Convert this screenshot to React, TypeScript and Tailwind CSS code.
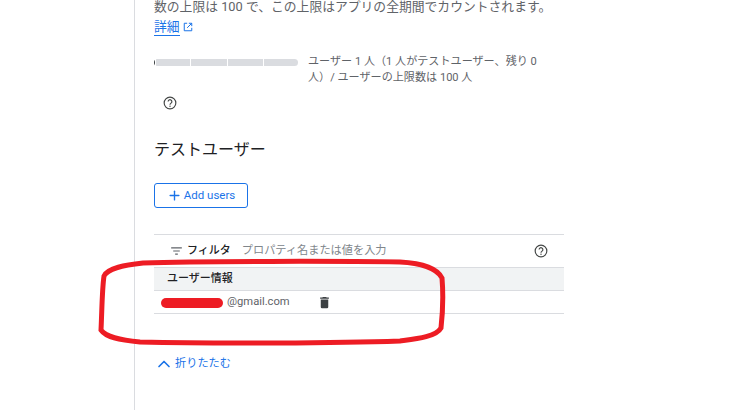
import { Plus, ChevronUp } from "lucide-react";

const font = { fontFamily: '"Roboto", "Noto Sans CJK JP", sans-serif' };

function Help({ className }: { className: string }) {
  return (
    <svg viewBox="0 0 24 24" width="14" height="14" className={className} fill="none">
      <circle cx="12" cy="12" r="10" stroke="#444746" strokeWidth="2" />
      <path d="M8.8 9.6a3.2 3.2 0 1 1 5 2.6c-1.1.8-1.8 1.3-1.8 2.6" stroke="#444746" strokeWidth="2" />
      <circle cx="12" cy="17.5" r="1.2" fill="#444746" />
    </svg>
  );
}

export default function App() {
  return (
    <div className="relative h-[413px] w-[749px] overflow-hidden bg-white" style={font}>
      <div className="ml-[134px] h-[413px] w-[431px] border-l border-[#dadce0] pl-[19px]">
        <p className="mt-[-3px] whitespace-nowrap text-[12.8px] leading-[20px] text-[#5f6368]">
          数の上限は 100 で、この上限はアプリの全期間でカウントされます。
        </p>
        <div className="mt-[1px] flex items-center gap-[3px] text-[12.8px] leading-[20px] text-[#1a73e8]">
          <span className="border-b border-[#1a73e8] leading-[17px]">詳細</span>
          <svg viewBox="0 0 24 24" width="10" height="10" fill="none" stroke="#1a73e8" strokeWidth="2.4">
            <path d="M10 3H3v18h18v-7M14 3h7v7M21 3 10 14" />
          </svg>
        </div>

        <div className="mt-[17px] flex">
          <div className="mt-[6px] flex h-[7px] w-[144px] gap-[1px] overflow-hidden rounded-full">
            <div className="w-[1px] bg-[#3c4043]" />
            <div className="w-[34px] bg-[#dadce0]" />
            <div className="w-[36px] bg-[#dadce0]" />
            <div className="w-[35px] bg-[#dadce0]" />
            <div className="flex-1 bg-[#dadce0]" />
          </div>
          <p className="ml-[10px] mt-[1px] w-[245px] text-[11.1px] leading-[16px] text-[#5f6368]">
            ユーザー 1 人（1 人がテストユーザー、残り 0 人）/ ユーザーの上限数は 100 人
          </p>
        </div>
        <Help className="mt-[10px] ml-[9px]" />

        <h2 className="mt-[28px] text-[16px] leading-[24px] text-[#202124]">テストユーザー</h2>

        <button className="mt-[21px] flex h-[25px] w-[94px] items-center justify-center gap-[2px] rounded-[3px] border border-[#1a73e8] text-[11.5px] font-normal text-[#1a73e8]">
          <Plus size={15} strokeWidth={2.2} />
          Add users
        </button>

        <div className="mt-[26px] w-[410px]">
          <div className="flex h-[33px] items-center border-t border-[#dadce0] pl-[17px] pr-[16px]">
            <svg viewBox="0 0 12 9" width="11" height="8" fill="none" stroke="#5f6368" strokeWidth="1.2">
              <path d="M0 1h12M2.3 4.5h7.4M4.5 8h3" />
            </svg>
            <span className="ml-[5px] text-[11px] font-medium text-[#202124]">フィルタ</span>
            <span className="ml-[11px] text-[11.2px] text-[#80868b]">プロパティ名または値を入力</span>
            <Help className="ml-auto" />
          </div>
          <div className="flex h-[24px] items-center border-y border-[#dadce0] bg-[#f1f3f4] pl-[13px] text-[11px] font-medium text-[#202124]">
            ユーザー情報
          </div>
          <div className="flex h-[23px] items-center border-b border-[#dadce0] text-[11.2px] text-[#5f6368]">
            <span className="ml-[73px]">@gmail.com</span>
            <svg viewBox="0 0 24 24" width="15" height="15" fill="#3c4043" className="ml-[27px]">
              <path d="M6 19a2 2 0 0 0 2 2h8a2 2 0 0 0 2-2V7H6zM19 4h-3.5l-1-1h-5l-1 1H5v2h14z" />
            </svg>
          </div>
        </div>

        <div className="mt-[40px] flex items-center gap-[1px] text-[11.2px] font-normal text-[#1a73e8]">
          <ChevronUp size={20} strokeWidth={2} />
          折りたたむ
        </div>
      </div>

      <svg className="pointer-events-none absolute left-0 top-0" width="749" height="413" fill="none">
        <path
          d="M101 330 C102 310 102 290 104 276 C108 268 125 265 143 263 C200 261 340 261 400 262 C420 263 437 268 442 278 C443 290 443 310 441 328 C436 337 415 339 400 341 C340 343 220 344 140 342 C118 340 106 337 101 330 Z"
          stroke="#ed1c24"
          strokeWidth="5"
        />
        <path d="M166 303H218" stroke="#ed1c24" strokeWidth="10" strokeLinecap="round" />
      </svg>
    </div>
  );
}
